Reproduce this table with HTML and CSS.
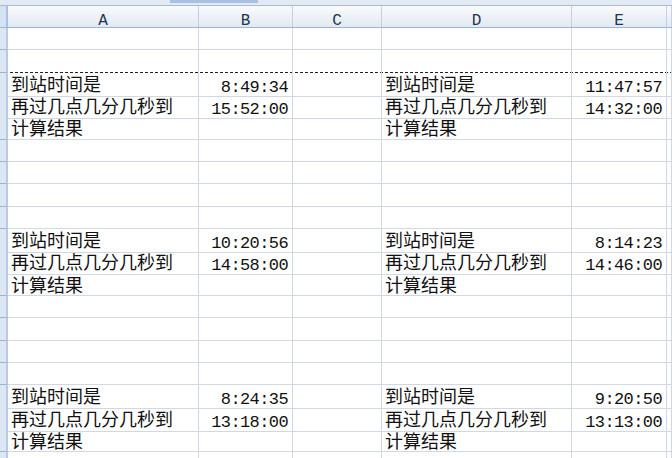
FILE: index.html
```html
<!DOCTYPE html>
<html lang="zh">
<head>
<meta charset="utf-8">
<title>Sheet</title>
<link rel="stylesheet" href="styles.css">
</head>
<body>
<div class="app">
  <div class="topstrip"><div class="gap"></div><div class="tab"></div><div class="rest"></div></div>
  <div class="row head">
    <div class="c rh"></div><div class="c hc">A</div><div class="c hc">B</div><div class="c hc">C</div><div class="c hc">D</div><div class="c hc">E</div><div class="c hc"></div>
  </div>
  <div class="row"><div class="c rh"></div><div class="c"></div><div class="c"></div><div class="c"></div><div class="c"></div><div class="c"></div><div class="c"></div></div>
  <div class="row pb"><div class="c rh"></div><div class="c"></div><div class="c"></div><div class="c"></div><div class="c"></div><div class="c"></div><div class="c"></div></div>
  <div class="row"><div class="c rh"></div><div class="c t">到站时间是</div><div class="c n">8:49:34</div><div class="c"></div><div class="c t">到站时间是</div><div class="c n">11:47:57</div><div class="c"></div></div>
  <div class="row"><div class="c rh"></div><div class="c t">再过几点几分几秒到</div><div class="c n">15:52:00</div><div class="c"></div><div class="c t">再过几点几分几秒到</div><div class="c n">14:32:00</div><div class="c"></div></div>
  <div class="row"><div class="c rh"></div><div class="c t">计算结果</div><div class="c"></div><div class="c"></div><div class="c t">计算结果</div><div class="c"></div><div class="c"></div></div>
  <div class="row"><div class="c rh"></div><div class="c"></div><div class="c"></div><div class="c"></div><div class="c"></div><div class="c"></div><div class="c"></div></div>
  <div class="row"><div class="c rh"></div><div class="c"></div><div class="c"></div><div class="c"></div><div class="c"></div><div class="c"></div><div class="c"></div></div>
  <div class="row"><div class="c rh"></div><div class="c"></div><div class="c"></div><div class="c"></div><div class="c"></div><div class="c"></div><div class="c"></div></div>
  <div class="row"><div class="c rh"></div><div class="c"></div><div class="c"></div><div class="c"></div><div class="c"></div><div class="c"></div><div class="c"></div></div>
  <div class="row"><div class="c rh"></div><div class="c t">到站时间是</div><div class="c n">10:20:56</div><div class="c"></div><div class="c t">到站时间是</div><div class="c n">8:14:23</div><div class="c"></div></div>
  <div class="row"><div class="c rh"></div><div class="c t">再过几点几分几秒到</div><div class="c n">14:58:00</div><div class="c"></div><div class="c t">再过几点几分几秒到</div><div class="c n">14:46:00</div><div class="c"></div></div>
  <div class="row"><div class="c rh"></div><div class="c t">计算结果</div><div class="c"></div><div class="c"></div><div class="c t">计算结果</div><div class="c"></div><div class="c"></div></div>
  <div class="row"><div class="c rh"></div><div class="c"></div><div class="c"></div><div class="c"></div><div class="c"></div><div class="c"></div><div class="c"></div></div>
  <div class="row"><div class="c rh"></div><div class="c"></div><div class="c"></div><div class="c"></div><div class="c"></div><div class="c"></div><div class="c"></div></div>
  <div class="row"><div class="c rh"></div><div class="c"></div><div class="c"></div><div class="c"></div><div class="c"></div><div class="c"></div><div class="c"></div></div>
  <div class="row"><div class="c rh"></div><div class="c"></div><div class="c"></div><div class="c"></div><div class="c"></div><div class="c"></div><div class="c"></div></div>
  <div class="row"><div class="c rh"></div><div class="c t">到站时间是</div><div class="c n">8:24:35</div><div class="c"></div><div class="c t">到站时间是</div><div class="c n">9:20:50</div><div class="c"></div></div>
  <div class="row"><div class="c rh"></div><div class="c t">再过几点几分几秒到</div><div class="c n">13:18:00</div><div class="c"></div><div class="c t">再过几点几分几秒到</div><div class="c n">13:13:00</div><div class="c"></div></div>
  <div class="row"><div class="c rh"></div><div class="c t">计算结果</div><div class="c"></div><div class="c"></div><div class="c t">计算结果</div><div class="c"></div><div class="c"></div></div>
  <div class="row"><div class="c rh"></div><div class="c"></div><div class="c"></div><div class="c"></div><div class="c"></div><div class="c"></div><div class="c"></div></div>
</div>
</body>
</html>
```

FILE: styles.css
```css
* { box-sizing: border-box; }
html, body { margin: 0; padding: 0; background: #fff; }
body { width: 672px; height: 458px; overflow: hidden; font-family: "Noto Sans CJK SC", "Noto Sans", sans-serif; }
.app { width: 672px; }
.topstrip { display: flex; height: 6px; background: #e3eaf3; border-bottom: 1px solid #a7bbd3; }
.topstrip .gap { width: 170px; }
.topstrip .tab { width: 88px; height: 3px; background: #a9c1e2; }
.topstrip .rest { flex: 1; }
.row {
  display: grid;
  grid-template-columns: 8px 191px 94px 89px 190px 95px 1fr;
  height: 22.333px;
}
.c {
  border-right: 1px solid #d0d7e5;
  border-bottom: 1px solid #d0d7e5;
  white-space: nowrap;
  overflow: visible;
  color: #111;
}
.rh { background: #dde6f3; border-right: 2px solid #b9cbe4; border-bottom: 1px solid #9fb3cf; }
.head { height: 22px; background: linear-gradient(#f9fbfd, #e2e9f3); border-bottom: 1px solid #9eb6ce; }
.head .c { border-bottom: none; border-right: 1px solid #c3d0e1; }
.head .rh { background: #d6e2f2; border-right: 2px solid #a9c1e2; }
.hc {
  font-family: "Liberation Mono", monospace;
  font-size: 16px;
  line-height: 12px;
  padding-top: 9px;
  text-align: center;
  color: #22354e;
}
.pb { background: repeating-linear-gradient(to right, #222 0 3px, transparent 3px 5px) left bottom / 100% 1px no-repeat, #fff; }
.pb .c { border-bottom: none; }
.pb .rh { border-bottom: 1px solid #9fb3cf; }
.t { font-size: 18px; line-height: 21.333px; padding-left: 3px; color: #111; }
.n {
  font-family: "Liberation Mono", monospace;
  font-size: 17px;
  letter-spacing: -0.6px;
  line-height: 16px;
  padding-top: 7px;
  padding-right: 4px;
  text-align: right;
  color: #111;
}
```
